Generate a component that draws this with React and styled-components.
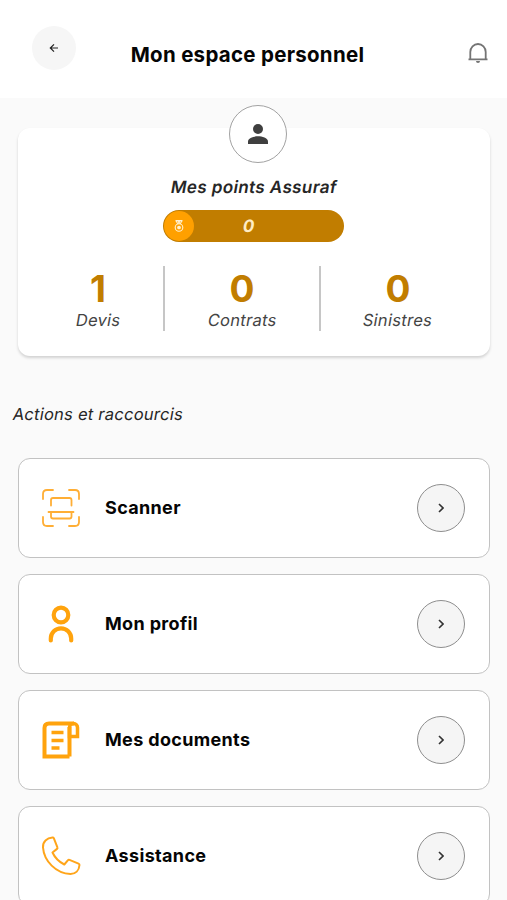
import React from "react";

import styled, { createGlobalStyle } from 'styled-components';

const GlobalStyle = createGlobalStyle`
body {
margin: 0;
background: #FAFAFA;
overflow: hidden;
}
* {
box-sizing: border-box;
}
`

const Page = styled.div`
height: 900px;
overflow: hidden;
background: #FAFAFA;
font-family: Inter, Roboto, sans-serif;
color: #050505;

svg {
display: block;
}
`

// header
const Header = styled.header`
display: grid;
grid-template-columns: 92px 1fr 104px;
height: 98px;
background: #FFFFFF;
`

const BackButton = styled.button`
display: flex;
align-items: center;
justify-content: center;
width: 44px;
height: 44px;
margin: 26px 0 0 32px;
padding: 0;
border: none;
border-radius: 50%;
background: #F6F6F6;
`

const Title = styled.h1`
margin: 42px 0 0;
font-weight: 700;
font-size: 20.5px;
line-height: 26px;
letter-spacing: 0.28px;
text-align: center;
white-space: nowrap;
`

const Notifications = styled.div`
justify-self: end;
margin: 40px 16px 0 0;
`

// slanted text keeps the upright letter shapes
const Slanted = styled.span`
display: inline-block;
transform: skewX(-10deg);
white-space: nowrap;
`

// points
const Card = styled.section`
display: flex;
flex-direction: column;
align-items: center;
height: 228px;
margin: 30px 17px 0 18px;
border-radius: 12px;
background: #FFFFFF;
box-shadow: 0 2px 3px rgba(0, 0, 0, 0.16);
`

const Avatar = styled.div`
display: flex;
align-items: center;
justify-content: center;
flex: none;
width: 58px;
height: 58px;
margin-top: -23px;
margin-left: 7px;
border: 1px solid #A2A2A2;
border-radius: 50%;
background: #FFFFFF;
`

const PointsTitle = styled.h2`
margin: 13px 0 0;
font-weight: 600;
font-size: 17px;
line-height: 22px;
letter-spacing: 0.4px;
color: #262626;
`

const PointsBar = styled.div`
display: flex;
align-items: center;
width: 181px;
height: 32px;
margin-top: 12px;
margin-right: 1px;
padding-left: 1px;
border-radius: 16px;
background: #C17D00;
`

const Medal = styled.div`
display: flex;
align-items: center;
justify-content: center;
width: 30px;
height: 30px;
border-radius: 50%;
background: #FFA000;
`

const Points = styled.span`
width: 110px;
text-align: center;
font-weight: 700;
font-size: 17px;
color: #FFECC4;
`

const Stats = styled.div`
display: flex;
height: 65px;
margin-top: 24px;
margin-right: 2px;
`

const Stat = styled.div`
display: flex;
flex-direction: column;
align-items: center;
width: ${props => props.width}px;
padding-top: 1px;

&:first-child {
padding-left: 2px;
}

& + & {
border-left: 2px solid #C6C6C6;
}
`

const StatValue = styled.span`
font-weight: 650;
font-size: 37px;
line-height: 43px;
color: #C17D00;
`

const StatLabel = styled.span`
font-size: 16.5px;
line-height: 20px;
letter-spacing: 0.3px;
color: #444444;
`

// actions
const SectionTitle = styled.h3`
margin: 47px 0 0 13px;
font-weight: normal;
font-size: 16.5px;
line-height: 22px;
letter-spacing: 0.25px;
color: #262626;
`

const Actions = styled.div`
display: grid;
gap: 16px;
margin: 33px 17px 0 18px;
`

const Action = styled.div`
display: grid;
grid-template-columns: 64px 1fr 48px;
align-items: center;
height: 100px;
padding: 0 24px 0 22px;
border: 1px solid #C2C2C2;
border-radius: 12px;
background: #FFFFFF;
`

const ActionLabel = styled.span`
font-weight: 700;
font-size: 18px;
line-height: 24px;
letter-spacing: 0.34px;
`

const Open = styled.button`
display: flex;
align-items: center;
justify-content: center;
width: 48px;
height: 48px;
padding: 0;
border: 1px solid #8E8E8E;
border-radius: 50%;
background: #F5F5F5;
`

const ScannerIcon = () => (
    <svg width="40" height="40" viewBox="0 0 40 40" fill="none" stroke="#FFAE35" strokeWidth="1.8" strokeLinecap="round" strokeLinejoin="round">
        <path d="M2 11V6q0-4 4-4h6M28 2h6q4 0 4 4v5M2 29v5q0 4 4 4h6M28 38h6q4 0 4-4v-5" />
        <path d="M10 17.500v-5.500q0-2 2-2h16.500q2 0 2 2v5.500M7.500 24h25M10 24.500v4q0 2 2 2h16.500q2 0 2-2v-4" />
    </svg>
)

const ProfileIcon = () => (
    <svg width="40" height="40" viewBox="0 0 40 40" fill="none" stroke="#FFA30D" strokeWidth="4.200" strokeLinecap="round">
        <circle cx="20" cy="11" r="7.300" />
        <path d="M9.800 36.500v-2a10.200 10.200 0 0 1 20.400 0v2" />
    </svg>
)

const DocumentsIcon = () => (
    <svg width="40" height="40" viewBox="0 0 40 40" fill="none" stroke="#FFA30D" strokeWidth="4">
        <path d="M28.500 36.500H3.500V8q0-4.500 4.500-4.500h25M28.500 36.500V7" />
        <path d="M28.500 16.500h8V7.500a4 4 0 0 0-8 0z" strokeWidth="3.500" />
        <path d="M10.500 12.500h12M10.500 20.500h12M10.500 28h8" strokeWidth="3.500" />
    </svg>
)

const AssistanceIcon = () => (
    <svg width="40" height="40" viewBox="0 0 40 40" fill="none" stroke="#FFA51A" strokeWidth="2" strokeLinejoin="round">
        <path d="M11.500 1.500C6 2 1.500 5.500 2 11.500 3 25 15 37.500 29.500 38c5 0 8.500-3.500 9-9q0-1-1-1.400l-9-3.800q-1-.4-1.700.5l-3.500 4.200C17.500 25.500 14 22 11.500 16.500l4.500-3.600q.8-.7.400-1.600L12.800 2.200q-.4-.8-1.300-.7z" />
    </svg>
)

const items = [
    { label: 'Scanner', Icon: ScannerIcon },
    { label: 'Mon profil', Icon: ProfileIcon },
    { label: 'Mes documents', Icon: DocumentsIcon },
    { label: 'Assistance', Icon: AssistanceIcon },
]

const stats = [
    { value: 1, label: 'Devis', width: 132 },
    { value: 0, label: 'Contrats', width: 156 },
    { value: 0, label: 'Sinistres', width: 156 },
]

class App extends React.Component {
    render() {
        return (
            <Page>
                <GlobalStyle />
                <Header>
                    <BackButton type="button" aria-label="Retour">
                        <svg width="10" height="10" viewBox="0 0 10 10" fill="none" stroke="#222222" strokeWidth="1.2">
                            <path d="M9 5H1.500M5 1.300L1.300 5 5 8.700" />
                        </svg>
                    </BackButton>
                    <Title>Mon espace personnel</Title>
                    <Notifications>
                        <svg width="26" height="26" viewBox="0 0 26 26" fill="none" stroke="#747474" strokeWidth="1.800">
                            <path d="M3.500 19.300h19M5.300 19V12a7.700 8 0 0 1 15.400 0V19" />
                            <path d="M11 21h4a2 2 0 0 1-4 0z" fill="#747474" stroke="none" />
                        </svg>
                    </Notifications>
                </Header>
                <Card>
                    <Avatar>
                        <svg width="20" height="20" viewBox="0 0 20 20" fill="#3F3F3F">
                            <circle cx="10" cy="5" r="5" />
                            <path d="M0 20v-2.500C0 14 6 12.300 10 12.300s10 1.700 10 5.200V20z" />
                        </svg>
                    </Avatar>
                    <PointsTitle><Slanted>Mes points Assuraf</Slanted></PointsTitle>
                    <PointsBar>
                        <Medal>
                            <svg width="10" height="12" viewBox="0 0 10 12" fill="none" stroke="#FFF1D2" strokeWidth="1.100">
                                <path d="M1.500.6h7M2 1l2 3M8 1L6 4M4 1l1 2 1-2" />
                                <circle cx="5" cy="7.500" r="3.800" />
                                <circle cx="5" cy="7.500" r="1.300" fill="#FFF1D2" />
                            </svg>
                        </Medal>
                        <Points><Slanted>0</Slanted></Points>
                    </PointsBar>
                    <Stats>
                        {stats.map(({ value, label, width }) => (
                            <Stat key={label} width={width}>
                                <StatValue>{value}</StatValue>
                                <StatLabel><Slanted>{label}</Slanted></StatLabel>
                            </Stat>
                        ))}
                    </Stats>
                </Card>
                <SectionTitle><Slanted>Actions et raccourcis</Slanted></SectionTitle>
                <Actions>
                    {items.map(({ label, Icon }) => (
                        <Action key={label}>
                            <Icon />
                            <ActionLabel>{label}</ActionLabel>
                            <Open type="button" aria-label={label}>
                                <svg width="6" height="10" viewBox="0 0 6 10" fill="none" stroke="#333333" strokeWidth="1.600">
                                    <path d="M1 1l4 4-4 4" />
                                </svg>
                            </Open>
                        </Action>
                    ))}
                </Actions>
            </Page>
        )
    }
}

export default App;
